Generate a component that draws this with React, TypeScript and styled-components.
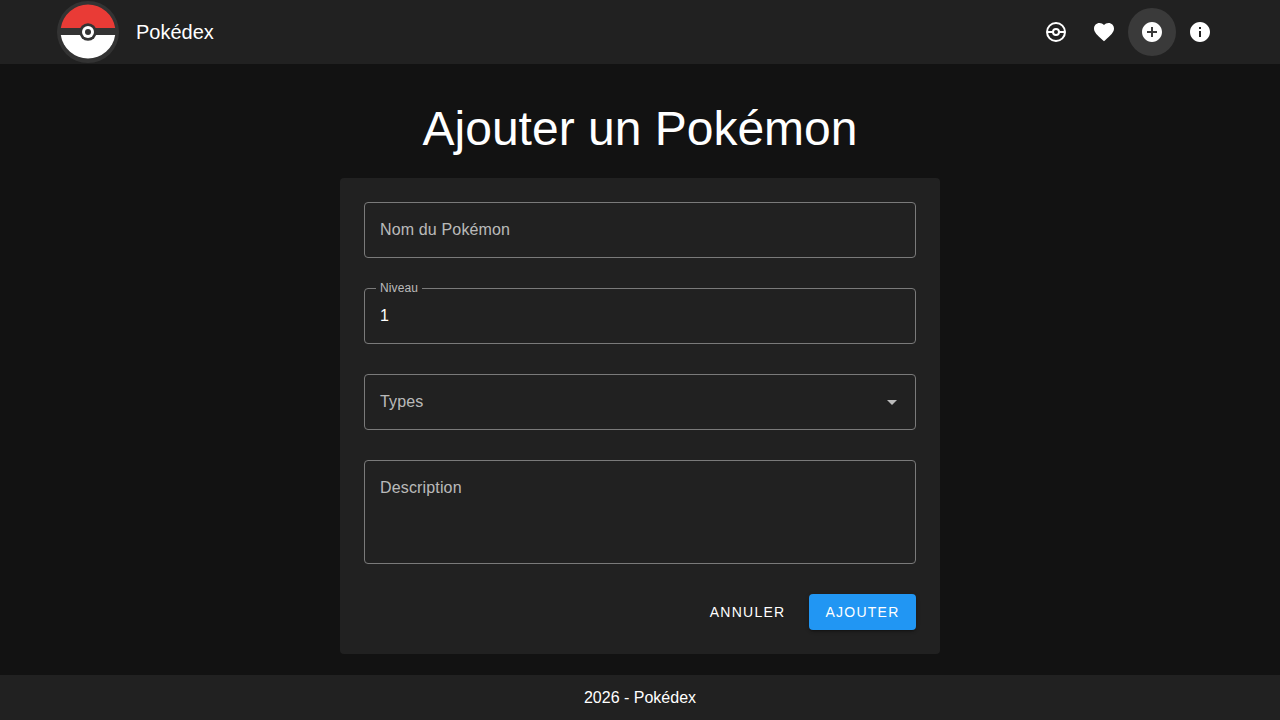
import React from "react";
import styled, { createGlobalStyle } from "styled-components";

const GlobalStyle = createGlobalStyle`
    html, body {
        margin: 0;
        height: 100%;
        background: #121212;
    }
    body {
        font-family: "Liberation Sans", Arial, sans-serif;
        color: #fff;
    }
    #root {
        height: 100%;
    }
`;

const Page = styled.div`
    display: flex;
    flex-direction: column;
    height: 720px;
    overflow: hidden;
`;

const Header = styled.header`
    display: flex;
    align-items: center;
    flex: 0 0 64px;
    padding: 0 56px;
    background: #212121;
`;

const Brand = styled.div`
    display: flex;
    align-items: center;
    gap: 16px;
    flex: 1;
    font-size: 20px;
`;

const Nav = styled.nav`
    display: flex;
`;

const NavButton = styled.button<{ $active?: boolean }>`
    display: flex;
    align-items: center;
    justify-content: center;
    width: 48px;
    height: 48px;
    padding: 0;
    border: 0;
    border-radius: 50%;
    color: #fff;
    background: ${(p) => (p.$active ? "#3a3a3a" : "transparent")};
`;

const Main = styled.main`
    flex: 1;
    display: flex;
    flex-direction: column;
    align-items: center;
    padding-top: 37px;
`;

const Title = styled.h1`
    margin: 0 0 21px;
    font-size: 48px;
    font-weight: 400;
    line-height: 56px;
`;

const Card = styled.form`
    display: flex;
    flex-direction: column;
    gap: 30px;
    width: 600px;
    padding: 24px;
    box-sizing: border-box;
    background: #212121;
    border-radius: 4px;
`;

const Field = styled.div<{ $tall?: boolean }>`
    position: relative;
    display: flex;
    align-items: ${(p) => (p.$tall ? "flex-start" : "center")};
    justify-content: space-between;
    height: ${(p) => (p.$tall ? "104px" : "56px")};
    padding: ${(p) => (p.$tall ? "15px 15px" : "0 15px 2px")};
    box-sizing: border-box;
    border: 1px solid #7a7a7a;
    border-radius: 4px;
    font-size: 16px;
    line-height: 23px;
    letter-spacing: 0.15px;
`;

const Placeholder = styled.span`
    color: rgba(255, 255, 255, 0.7);
`;

const Value = styled.span`
    color: #fff;
`;

const FloatingLabel = styled.label`
    position: absolute;
    top: -8px;
    left: 11px;
    padding: 0 4px;
    background: #212121;
    color: rgba(255, 255, 255, 0.7);
    font-size: 12px;
    line-height: 14px;
    letter-spacing: 0.1px;
`;

const Arrow = styled.svg`
    width: 24px;
    height: 24px;
    margin: 2px -4px 0 0;
    fill: rgba(255, 255, 255, 0.7);
`;

const Actions = styled.div`
    display: flex;
    justify-content: flex-end;
    align-items: center;
    gap: 7px;
`;

const Button = styled.button<{ $primary?: boolean }>`
    height: 36px;
    padding: 0 16.5px;
    border: 0;
    border-radius: 4px;
    font-family: inherit;
    font-size: 14px;
    letter-spacing: 1.25px;
    text-transform: uppercase;
    color: #fff;
    background: ${(p) => (p.$primary ? "#2196f3" : "transparent")};
    box-shadow: ${(p) =>
        p.$primary
            ? "0 3px 1px -2px rgba(0,0,0,.2), 0 2px 2px 0 rgba(0,0,0,.14), 0 1px 5px 0 rgba(0,0,0,.12)"
            : "none"};
`;

const Footer = styled.footer`
    display: flex;
    align-items: center;
    justify-content: center;
    flex: 0 0 45px;
    background: #212121;
    font-size: 16px;
`;

const Logo = () => (
    <svg width="64" height="64" viewBox="0 0 64 64">
        <circle cx="32" cy="32" r="31" fill="#333" />
        <path d="M4.8 28a27.5 27.5 0 0 1 54.4 0z" fill="#e93b36" />
        <path d="M4.8 35a27.5 27.5 0 0 0 54.4 0z" fill="#fff" />
        <circle cx="32" cy="32" r="8.7" fill="#333" />
        <circle cx="32" cy="32" r="6" fill="#fff" />
        <circle cx="32" cy="32" r="3" fill="#333" />
    </svg>
);

const Icon = ({ d }: { d: string }) => (
    <svg width="24" height="24" viewBox="0 0 24 24" fill="currentColor">
        <path d={d} />
    </svg>
);

const BallIcon = () => (
    <svg width="24" height="24" viewBox="0 0 24 24" fill="none" stroke="currentColor" strokeWidth="2">
        <circle cx="12" cy="12" r="9" />
        <path d="M3 12h6M15 12h6" />
        <circle cx="12" cy="12" r="3" />
    </svg>
);

const App: React.FC = () => (
    <Page>
        <GlobalStyle />
        <Header>
            <Brand>
                <Logo />
                Pokédex
            </Brand>
            <Nav>
                <NavButton>
                    <BallIcon />
                </NavButton>
                <NavButton>
                    <Icon d="M12 21.35l-1.45-1.32C5.4 15.36 2 12.28 2 8.5 2 5.42 4.42 3 7.5 3c1.74 0 3.41.81 4.5 2.09C13.09 3.81 14.76 3 16.5 3 19.58 3 22 5.42 22 8.5c0 3.78-3.4 6.86-8.55 11.54L12 21.35z" />
                </NavButton>
                <NavButton $active>
                    <Icon d="M12 2C6.48 2 2 6.48 2 12s4.48 10 10 10 10-4.48 10-10S17.52 2 12 2zm5 11h-4v4h-2v-4H7v-2h4V7h2v4h4v2z" />
                </NavButton>
                <NavButton>
                    <Icon d="M12 2C6.48 2 2 6.48 2 12s4.48 10 10 10 10-4.48 10-10S17.52 2 12 2zm1 15h-2v-6h2v6zm0-8h-2V7h2v2z" />
                </NavButton>
            </Nav>
        </Header>
        <Main>
            <Title>Ajouter un Pokémon</Title>
            <Card>
                <Field>
                    <Placeholder>Nom du Pokémon</Placeholder>
                </Field>
                <Field>
                    <FloatingLabel>Niveau</FloatingLabel>
                    <Value>1</Value>
                </Field>
                <Field>
                    <Placeholder>Types</Placeholder>
                    <Arrow viewBox="0 0 24 24">
                        <path d="M7 10l5 5 5-5z" />
                    </Arrow>
                </Field>
                <Field $tall>
                    <Placeholder>Description</Placeholder>
                </Field>
                <Actions>
                    <Button type="button">Annuler</Button>
                    <Button type="button" $primary>
                        Ajouter
                    </Button>
                </Actions>
            </Card>
        </Main>
        <Footer>2026 - Pokédex</Footer>
    </Page>
);

export default App;
